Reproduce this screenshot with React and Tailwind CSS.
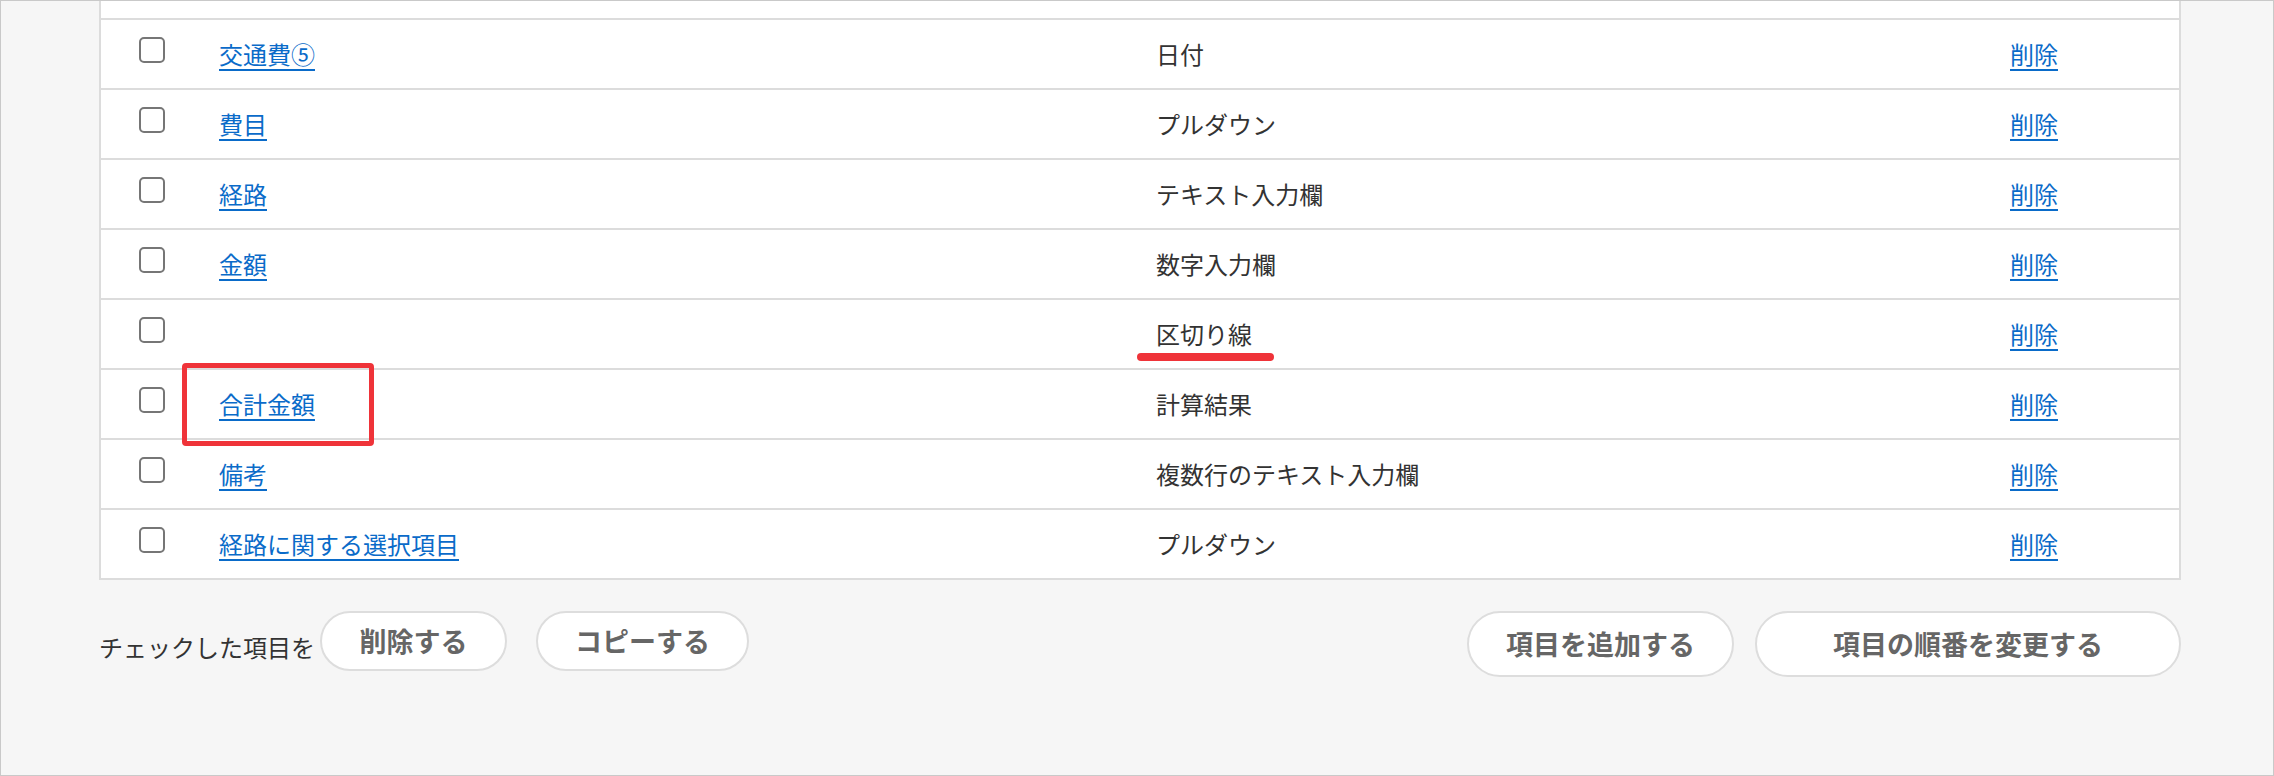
import React from 'react';

const rows = [
  { name: '交通費⑤', type: '日付' },
  { name: '費目', type: 'プルダウン' },
  { name: '経路', type: 'テキスト入力欄' },
  { name: '金額', type: '数字入力欄' },
  { name: '', type: '区切り線', divider: true },
  { name: '合計金額', type: '計算結果', boxed: true },
  { name: '備考', type: '複数行のテキスト入力欄' },
  { name: '経路に関する選択項目', type: 'プルダウン' },
];

const font = { fontFamily: '"Noto Sans CJK JP", "Noto Sans", sans-serif' };

// Checkbox drawn like the native one
const Checkbox = () => (
  <div className="w-[26px] h-[26px] mb-[8px] rounded-[5px] border-2 border-[#767676] bg-white" />
);

const Row = ({ row }) => (
  <div className="relative h-[70px] border-t-2 border-[#dcdcdc] flex items-center">
    <div className="w-[118px] pl-[38px] flex items-center">
      <Checkbox />
    </div>
    <div className="w-[937px]">
      {row.name && (
        <a href="#" className="text-[24px] text-[#0a6bc9] underline decoration-[2px] underline-offset-[5px]">
          {row.name}
        </a>
      )}
    </div>
    <div className="w-[854px] text-[24px] text-[#333333]">{row.type}</div>
    <div>
      <a href="#" className="text-[24px] text-[#0a6bc9] underline decoration-[2px] underline-offset-[5px]">
        削除
      </a>
    </div>

    {/* annotations */}
    {row.divider && (
      <div className="absolute z-10 left-[1036px] top-[53px] w-[137px] h-[8px] rounded-full bg-[#ef3339]" />
    )}
    {row.boxed && (
      <div className="absolute z-10 left-[81px] top-[-7px] w-[192px] h-[83px] rounded-[4px] border-[5px] border-[#ef3339]" />
    )}
  </div>
);

const PillButton = ({ children, className }) => (
  <button className={`rounded-full border-2 border-[#dddddd] bg-white text-[27px] font-bold text-[#666666] ${className}`}>
    {children}
  </button>
);

export default function App() {
  return (
    <div className="w-[2274px] h-[776px] bg-[#f6f6f6] border border-[#c9c9c9] overflow-hidden" style={font}>
      <div className="ml-[98px] w-[2082px]">
        <div className="bg-white border-x-2 border-b-2 border-[#dcdcdc]">
          <div className="h-[17px]" />
          {rows.map((row, i) => (
            <Row key={i} row={row} />
          ))}
        </div>

        <div className="mt-[31px] flex justify-between items-start">
          <div className="flex items-center">
            <span className="pt-[12px] text-[24px] text-[#333333]">チェックした項目を</span>
            <PillButton className="ml-[5px] w-[187px] h-[60px]">削除する</PillButton>
            <PillButton className="ml-[29px] w-[213px] h-[60px]">コピーする</PillButton>
          </div>
          <div className="flex gap-[21px]">
            <PillButton className="w-[267px] h-[66px]">項目を追加する</PillButton>
            <PillButton className="w-[426px] h-[66px]">項目の順番を変更する</PillButton>
          </div>
        </div>
      </div>
    </div>
  );
}
